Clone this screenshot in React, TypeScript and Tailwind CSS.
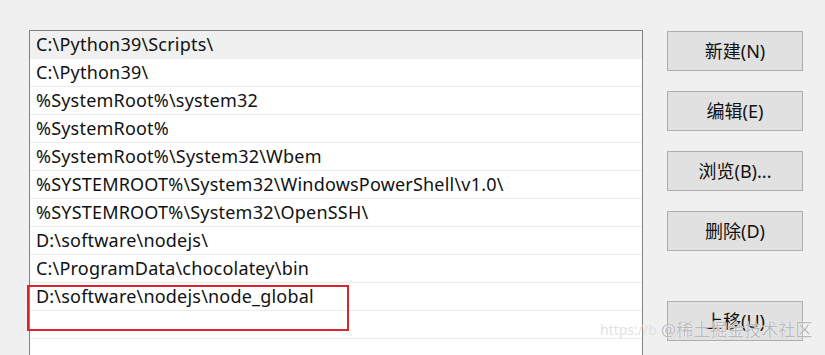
const paths = [
  "C:\\Python39\\Scripts\\",
  "C:\\Python39\\",
  "%SystemRoot%\\system32",
  "%SystemRoot%",
  "%SystemRoot%\\System32\\Wbem",
  "%SYSTEMROOT%\\System32\\WindowsPowerShell\\v1.0\\",
  "%SYSTEMROOT%\\System32\\OpenSSH\\",
  "D:\\software\\nodejs\\",
  "C:\\ProgramData\\chocolatey\\bin",
  "D:\\software\\nodejs\\node_global",
  "",
  "",
];

function Button({ label }: { label: string }) {
  return (
    <div className="flex h-[40px] w-[136px] items-center justify-center border border-[#adadad] bg-[#e1e1e1] text-[18px] text-[#111]">
      {label}
    </div>
  );
}

export default function App() {
  return (
    <div
      className="relative h-[355px] w-[825px] overflow-hidden bg-[#f0f0f0]"
      style={{ fontFamily: '"Noto Sans", "Noto Sans CJK SC", sans-serif' }}>
      <div className="flex pl-[29px] pt-[30px]">
        {/* path list */}
        <div className="h-[340px] w-[614px] border-l border-t border-r border-[#828282] bg-white">
          {paths.map((p, i) => (
            <div
              key={i}
              className={`flex h-[28px] items-center border-b border-[#ececec] pl-[6px] text-[18px] tracking-[0.2px] text-[#111] ${i === 0 ? "bg-[#f0f0f0]" : "bg-white"}`}>
              {p}
            </div>
          ))}
        </div>

        {/* buttons */}
        <div className="ml-[24px] mt-[1px] flex flex-col gap-[20px]">
          <Button label="新建(N)" />
          <Button label="编辑(E)" />
          <Button label="浏览(B)..." />
          <Button label="删除(D)" />
          <div className="mt-[30px]">
            <Button label="上移(U)" />
          </div>
        </div>
      </div>

      {/* highlight box */}
      <div className="absolute left-[27px] top-[285px] h-[46px] w-[322px] border-2 border-[#d9262e]" />

      {/* watermark */}
      <div className="absolute left-[600px] top-[321px] flex items-center gap-[4px] whitespace-nowrap leading-none">
        <span className="text-[14px] text-[#e2e2e2]">https://b</span>
        <span
          className="text-[17px] text-[#9a9a9a]/70"
          style={{ textShadow: "0 0 1px #fff, 0 0 1px #fff" }}>
          @稀土掘金技术社区
        </span>
      </div>
    </div>
  );
}
